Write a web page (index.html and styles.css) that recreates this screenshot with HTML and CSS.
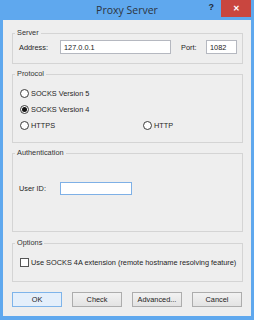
FILE: index.html
```html
<!DOCTYPE html>
<html lang="en">
<head>
  <meta charset="UTF-8" />
  <title>Proxy Server</title>
  <link rel="stylesheet" href="styles.css">
</head>
<body>
  <div class="window">
    <div class="titlebar">
      <span></span>
      <span class="title">Proxy Server</span>
      <div class="controls">
        <span class="help">?</span>
        <span class="close">&#x2715;</span>
      </div>
    </div>

    <div class="content">
      <fieldset class="group server">
        <legend>Server</legend>
        <div class="row">
          <label class="lbl addr-lbl">Address:</label>
          <input type="text" class="field addr" value="127.0.0.1">
          <label class="lbl port-lbl">Port:</label>
          <input type="text" class="field port" value="1082">
        </div>
      </fieldset>

      <fieldset class="group protocol">
        <legend>Protocol</legend>
        <label class="option first"><input type="radio" name="proto"> SOCKS Version 5</label>
        <label class="option"><input type="radio" name="proto" checked> SOCKS Version 4</label>
        <div class="option-pair">
          <label class="option"><input type="radio" name="proto"> HTTPS</label>
          <label class="option"><input type="radio" name="proto"> HTTP</label>
        </div>
      </fieldset>

      <fieldset class="group auth">
        <legend>Authentication</legend>
        <div class="row">
          <label class="lbl addr-lbl">User ID:</label>
          <input type="text" class="field user">
        </div>
      </fieldset>

      <fieldset class="group options">
        <legend>Options</legend>
        <label class="option check"><input type="checkbox"> Use SOCKS 4A extension (remote hostname resolving feature)</label>
      </fieldset>

      <div class="buttons">
        <button class="default">OK</button>
        <button>Check</button>
        <button>Advanced...</button>
        <button>Cancel</button>
      </div>
    </div>
  </div>
</body>
</html>
```

FILE: styles.css
```css
* {
  box-sizing: border-box;
  margin: 0;
  padding: 0;
}

body {
  width: 254px;
  height: 320px;
  font-family: 'Liberation Sans', Arial, sans-serif;
  font-size: 7.35px;
  color: #1e1e1e;
}

.window {
  width: 254px;
  height: 320px;
  background-color: #5fa8ee;
  padding: 0 3px 4px 3px;
  display: flex;
  flex-direction: column;
}

.titlebar {
  height: 20px;
  display: grid;
  grid-template-columns: 1fr auto 1fr;
}

.title {
  font-family: 'Open Sans', sans-serif;
  font-size: 10.5px;
  color: #2d3440;
  line-height: 20px;
}

.controls {
  justify-self: end;
  display: flex;
  align-items: flex-start;
}

.help {
  font-family: 'Liberation Sans', sans-serif;
  font-weight: bold;
  font-size: 9px;
  color: #1f2a36;
  margin: 2px 7px 0 0;
}

.close {
  width: 30px;
  height: 17px;
  background-color: #c9463f;
  color: #fff;
  font-size: 8px;
  font-weight: bold;
  display: flex;
  align-items: center;
  justify-content: center;
}

.content {
  flex: 1;
  background-color: #eeeeee;
  padding: 8px 8px 0 9px;
  display: flex;
  flex-direction: column;
}

.group {
  border: 1px solid #d4d4d4;
  padding: 0;
  margin: 0;
}

.group legend {
  margin-left: 2px;
  padding: 0 2px;
  line-height: 10px;
  color: #333;
}

.server { height: 36px; }
.protocol { height: 74px; margin-top: 5px; }
.auth { height: 84px; margin-top: 5px; }
.options { height: 44px; margin-top: 6px; }

.row {
  display: flex;
  align-items: center;
  padding-left: 6px;
  margin-top: 2px;
}

.auth .row {
  margin-top: 24px;
}

.lbl {
  width: 41px;
}

.port-lbl {
  width: 25px;
  margin-left: 10px;
}

.field {
  height: 14px;
  border: 1px solid #b5b8c0;
  background: #fff;
  font-family: inherit;
  font-size: 7.35px;
  color: #222;
  padding: 0 3px;
  outline: none;
}

.addr { width: 111px; }
.port { width: 31px; }

.user {
  width: 72px;
  height: 13px;
  border-color: #7eb0e6;
}

.option {
  display: flex;
  align-items: center;
  height: 16px;
  padding-left: 7px;
  gap: 2px;
}

.option.first {
  margin-top: 6px;
}

.option-pair {
  display: grid;
  grid-template-columns: 130px 1fr;
}

.option-pair .option + .option {
  padding-left: 0;
}

.option input {
  appearance: none;
  width: 9px;
  height: 9px;
  border: 1px solid #3c3c3c;
  background: #fff;
  margin: 0;
  display: flex;
  align-items: center;
  justify-content: center;
}

.option input[type="radio"] {
  border-radius: 50%;
}

.option input[type="radio"]:checked::after {
  content: "";
  width: 5px;
  height: 5px;
  border-radius: 50%;
  background: #111;
}

.check {
  margin-top: 6px;
}

.check input {
  border-color: #555;
}

.buttons {
  display: flex;
  justify-content: space-between;
  margin-top: 10px;
  padding-right: 1px;
}

button {
  width: 50px;
  height: 15px;
  font-family: inherit;
  font-size: 7.35px;
  color: #222;
  border: 1px solid #adadad;
  background: linear-gradient(#f2f2f2, #e3e3e3);
}

button.default {
  border-color: #7eb4ea;
  background: #e4effb;
}
```
